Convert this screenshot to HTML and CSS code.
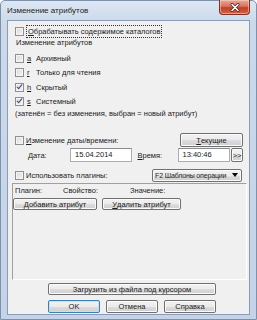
FILE: index.html
```html
<!DOCTYPE html>
<html lang="ru">

<head>
    <meta charset="UTF-8">
    <title>Изменение атрибутов</title>
    <link rel="stylesheet" href="styles.css">
</head>

<body>

    <div class="window">
        <div class="titlebar">
            <span class="title">Изменение атрибутов</span>
            <div class="close">
                <svg width="10" height="9" viewBox="0 0 10 9">
                    <path d="M2 1.5 L8 7.5 M8 1.5 L2 7.5" stroke="#4a2018" stroke-width="3" stroke-linecap="round" />
                    <path d="M2 1.5 L8 7.5 M8 1.5 L2 7.5" stroke="#fff" stroke-width="1.6" stroke-linecap="round" />
                </svg>
            </div>
        </div>

        <div class="client">
            <div class="row first">
                <span class="box"></span>
                <span class="focus"><u>О</u>брабатывать содержимое каталогов</span>
            </div>

            <div class="caption">Изменение атрибутов</div>

            <div class="attrs">
                <div class="row attr"><span class="box"></span><u class="key">a</u><span>Архивный</span></div>
                <div class="row attr"><span class="box"></span><u class="key">r</u><span>Только для чтения</span></div>
                <div class="row attr"><span class="box checked"></span><u class="key">h</u><span>Скрытый</span></div>
                <div class="row attr"><span class="box checked"></span><u class="key">s</u><span>Системный</span></div>
            </div>

            <div class="note">(затенён = без изменения, выбран = новый атрибут)</div>

            <div class="row date-head">
                <span class="box"></span>
                <span class="label"><u>И</u>зменение даты/времени:</span>
                <button class="btn now"><u>Т</u>екущие</button>
            </div>

            <div class="row date-row">
                <span class="field-label date-label"><u>Д</u>ата:</span>
                <span class="input date">15.04.2014</span>
                <span class="field-label time-label"><u>В</u>ремя:</span>
                <span class="input time">13:40:46</span>
                <button class="btn more">&gt;&gt;</button>
            </div>

            <div class="row plugin-head">
                <span class="box"></span>
                <span class="label">Использовать плагины:</span>
                <div class="combo">
                    <span class="combo-text">F2 Шаблоны операции</span>
                    <svg width="6" height="4" viewBox="0 0 6 4"><path d="M0 0 H6 L3 4 Z" fill="#000" /></svg>
                </div>
            </div>

            <div class="panel">
                <div class="panel-head">
                    <span class="col-plugin">Плагин:</span>
                    <span class="col-prop">Свойство:</span>
                    <span>Значение:</span>
                </div>
                <div class="panel-buttons">
                    <button class="btn add"><u>Д</u>обавить атрибут</button>
                    <button class="btn remove"><u>У</u>далить атрибут</button>
                </div>
            </div>

            <button class="btn load">Загрузить из файла под курсором</button>

            <div class="actions">
                <button class="btn default">OK</button>
                <button class="btn">Отмена</button>
                <button class="btn">Справка</button>
            </div>
        </div>
    </div>

</body>

</html>
```

FILE: styles.css
```css
body {
    margin: 0;
    background: #fff;
    font-family: "Liberation Sans", Arial, sans-serif;
    font-size: 7.5px;
    color: #1a1a1a;
}

u {
    text-decoration: underline;
    text-underline-offset: 1px;
}

.window {
    box-sizing: border-box;
    width: 257px;
    height: 320px;
    display: flex;
    flex-direction: column;
    padding: 0 6px 4px;
    border: 1px solid #7d91aa;
    border-radius: 5px 5px 0 0;
    background: linear-gradient(#dde7f2, #cbd9ea 22px, #c4d3e7);
}

.titlebar {
    height: 19px;
    display: flex;
    align-items: center;
    position: relative;
}

.title {
    font-size: 8px;
    color: #1c1c1c;
    padding-bottom: 1px;
}

.close {
    position: absolute;
    top: -1px;
    right: 0;
    width: 31px;
    height: 15px;
    box-sizing: border-box;
    border: 1px solid #7c3026;
    border-top: none;
    border-radius: 0 0 4px 4px;
    background: linear-gradient(#e9a898, #d7725e 45%, #c2401f 55%, #d0634a);
    box-shadow: inset 0 0 0 1px rgba(255, 220, 210, 0.5);
    display: flex;
    align-items: center;
    justify-content: center;
}

.client {
    flex: 1;
    display: flex;
    flex-direction: column;
    padding: 0 6px 0 7px;
    background: #f0f0f0;
    border: 1px solid #8a9db6;
}

.row {
    display: flex;
    align-items: center;
    height: 14px;
    white-space: nowrap;
}

.box {
    box-sizing: border-box;
    width: 9px;
    height: 9px;
    flex: none;
    border: 1px solid #8e8f8f;
    background: linear-gradient(135deg, #d6d8dc, #f7f7f7);
    box-shadow: inset 0 0 0 1px #f4f4f4;
    margin-right: 2px;
    position: relative;
}

.box.checked::after {
    content: "";
    position: absolute;
    left: 1px;
    top: -1px;
    width: 2px;
    height: 5px;
    border: solid #3c4f74;
    border-width: 0 1.5px 1.5px 0;
    transform: translate(1px, 0) rotate(40deg);
}

.first {
    margin-top: 3px;
}

.focus {
    outline: 1px dotted #333;
    outline-offset: 0;
    padding: 0 1px;
    margin-left: 1px;
    line-height: 11px;
}

.caption {
    height: 10px;
    line-height: 10px;
    margin-left: 1px;
}

.attrs {
    margin-top: 3px;
}

.attr {
    height: 14.5px;
}

.key {
    width: 9px;
    margin-left: 1px;
}

.note {
    height: 10px;
    line-height: 10px;
    white-space: nowrap;
}

.date-head {
    margin-top: 14px;
}

.btn {
    box-sizing: border-box;
    height: 12px;
    padding: 0;
    font: inherit;
    color: #1a1a1a;
    white-space: nowrap;
    border: 1px solid #707070;
    border-radius: 2px;
    background: linear-gradient(#f2f2f2, #ebebeb 50%, #dddddd 51%, #cfcfcf);
    box-shadow: inset 0 0 0 1px #fbfbfb;
    display: flex;
    align-items: center;
    justify-content: center;
}

.now {
    margin-left: auto;
    width: 63px;
    height: 14px;
}

.date-row {
    margin-top: 1px;
}

.field-label {
    flex: none;
}

.date-label {
    margin-left: 13px;
    width: 42px;
}

.time-label {
    margin-left: 6px;
    width: 40px;
}

.input {
    box-sizing: border-box;
    height: 14px;
    line-height: 12px;
    padding-left: 4px;
    background: #fff;
    border: 1px solid #abadb3;
    border-top-color: #8a8c91;
}

.date {
    width: 62px;
}

.time {
    width: 53px;
}

.more {
    width: 12px;
    height: 14px;
    margin-left: 1px;
}

.plugin-head {
    margin-top: 6px;
}

.combo {
    box-sizing: border-box;
    flex: none;
    margin-left: auto;
    margin-right: 1px;
    width: 90px;
    height: 13px;
    padding: 0 3px 0 2px;
    border: 1px solid #707070;
    border-radius: 2px;
    background: linear-gradient(#f2f2f2, #ebebeb 50%, #dddddd 51%, #cfcfcf);
    box-shadow: inset 0 0 0 1px #fbfbfb;
    display: flex;
    align-items: center;
    justify-content: space-between;
}

.combo-text {
    white-space: nowrap;
    font-size: 7px;
    letter-spacing: -0.15px;
}

.panel {
    box-sizing: border-box;
    height: 97px;
    margin: 1px -4px 0 -3px;
    border: 1px solid #a0a0a0;
    border-right-color: #fff;
    border-bottom-color: #fff;
}

.panel-head {
    display: flex;
    height: 10px;
    line-height: 10px;
    margin-top: 2px;
    padding-left: 2px;
}

.col-plugin {
    width: 48px;
}

.col-prop {
    width: 67px;
}

.panel-buttons {
    display: flex;
    gap: 5px;
    margin-top: 2px;
}

.add {
    width: 84px;
}

.remove {
    width: 79px;
}

.load {
    margin: 3px 0 0 33px;
    width: 168px;
}

.actions {
    display: flex;
    gap: 6px;
    margin: 5px 0 0 33px;
}

.actions .btn {
    width: 52px;
    height: 13px;
}

.actions .default {
    border-color: #3c7fb1;
    box-shadow: inset 0 0 0 1px #bfe3f8;
}
```
